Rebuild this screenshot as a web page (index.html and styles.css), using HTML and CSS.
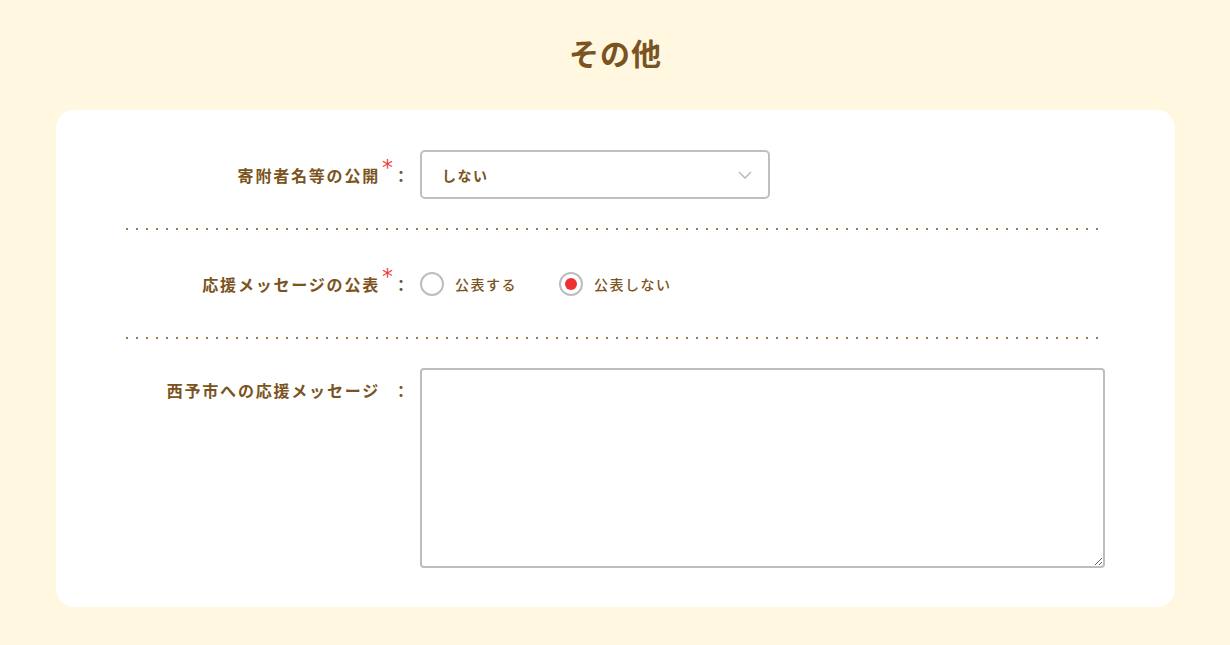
FILE: index.html
```html
<!DOCTYPE html>
<html lang="ja">
<head>
<meta charset="utf-8">
<title>その他</title>
<link rel="stylesheet" href="styles.css">
</head>
<body>
<main class="page">
  <h1 class="title">その他</h1>
  <section class="card">
    <div class="row">
      <div class="label"><span class="label-text">寄附者名等の公開</span><span class="req">*</span><span class="colon">：</span></div>
      <div class="field">
        <div class="select">
          <span class="select-value">しない</span>
          <svg class="chevron" width="14" height="8" viewBox="0 0 14 8"><path d="M1 1l6 6 6-6" fill="none" stroke="#bdbdbd" stroke-width="1.6"/></svg>
        </div>
      </div>
    </div>
    <div class="row">
      <div class="label"><span class="label-text">応援メッセージの公表</span><span class="req">*</span><span class="colon">：</span></div>
      <div class="field radios">
        <label class="radio"><span class="circle"></span><span class="radio-text">公表する</span></label>
        <label class="radio checked"><span class="circle"><span class="dot"></span></span><span class="radio-text">公表しない</span></label>
      </div>
    </div>
    <div class="row last">
      <div class="label top"><span class="label-text">西予市への応援メッセージ</span><span class="req"></span><span class="colon">：</span></div>
      <div class="field">
        <textarea class="textarea"></textarea>
      </div>
    </div>
  </section>
</main>
</body>
</html>
```

FILE: styles.css
```css
* { box-sizing: border-box; }
html, body { margin: 0; padding: 0; }
body {
  background: #fff7df;
  font-family: "Noto Sans CJK JP", "Noto Sans", sans-serif;
  color: #7a5320;
}
.page {
  padding: 30px 55px 38px 56px;
}
.title {
  margin: 0 0 35px;
  text-align: center;
  font-size: 30px;
  line-height: 45px;
  font-weight: 700;
  letter-spacing: 1px;
  color: #7a5320;
}
.card {
  background: #ffffff;
  border-radius: 18px;
  padding: 40px 70px 39px;
}
.row {
  display: flex;
  align-items: center;
  margin-bottom: 29px;
  background-image: repeating-linear-gradient(to right, #9b7a4c 0 2px, transparent 2px 10px);
  background-size: 100% 2px;
  background-repeat: no-repeat;
  background-position: left bottom;
  padding-bottom: 31px;
}
.row.last {
  background: none;
  padding-bottom: 0;
  margin-bottom: 0;
  align-items: flex-start;
}
.label {
  width: 294px;
  flex: none;
  display: flex;
  justify-content: flex-end;
  align-items: center;
  font-size: 16px;
  font-weight: 700;
  letter-spacing: 1.8px;
}
.label.top { padding-top: 10px; }
.label-text { white-space: nowrap; }
.req {
  width: 13px;
  color: #f03c3c;
  font-family: "DejaVu Sans", sans-serif;
  font-size: 22px;
  line-height: 22px;
  font-weight: 400;
  align-self: flex-start;
  margin-top: -6px;
  padding-left: 2px;
  letter-spacing: 0;
}
.colon {
  width: 27px;
  text-align: left;
  padding-left: 0;
  letter-spacing: 0;
}
.field { flex: 1; min-height: 49px; display: flex; align-items: center; }
.select {
  width: 350px;
  height: 49px;
  border: 2px solid #bfbfbf;
  border-radius: 5px;
  display: flex;
  align-items: center;
  justify-content: space-between;
  padding: 0 16px 0 20px;
}
.select-value {
  font-size: 14px;
  font-weight: 700;
  letter-spacing: 1.5px;
}
.chevron { display: block; }
.radios { gap: 42px; }
.radio {
  display: flex;
  align-items: center;
  gap: 11px;
  font-size: 14px;
  font-weight: 500;
  letter-spacing: 1.5px;
}
.circle {
  width: 24px;
  height: 24px;
  border: 2px solid #bdbdbd;
  border-radius: 50%;
  display: flex;
  align-items: center;
  justify-content: center;
}
.dot {
  width: 12px;
  height: 12px;
  border-radius: 50%;
  background: #ee3030;
}
.textarea {
  display: block;
  width: 685px;
  height: 200px;
  border: 2px solid #bdbdbd;
  border-radius: 4px;
  font-family: inherit;
  font-size: 14px;
  color: #7a5320;
  padding: 8px;
  background: #fff;
}
```
